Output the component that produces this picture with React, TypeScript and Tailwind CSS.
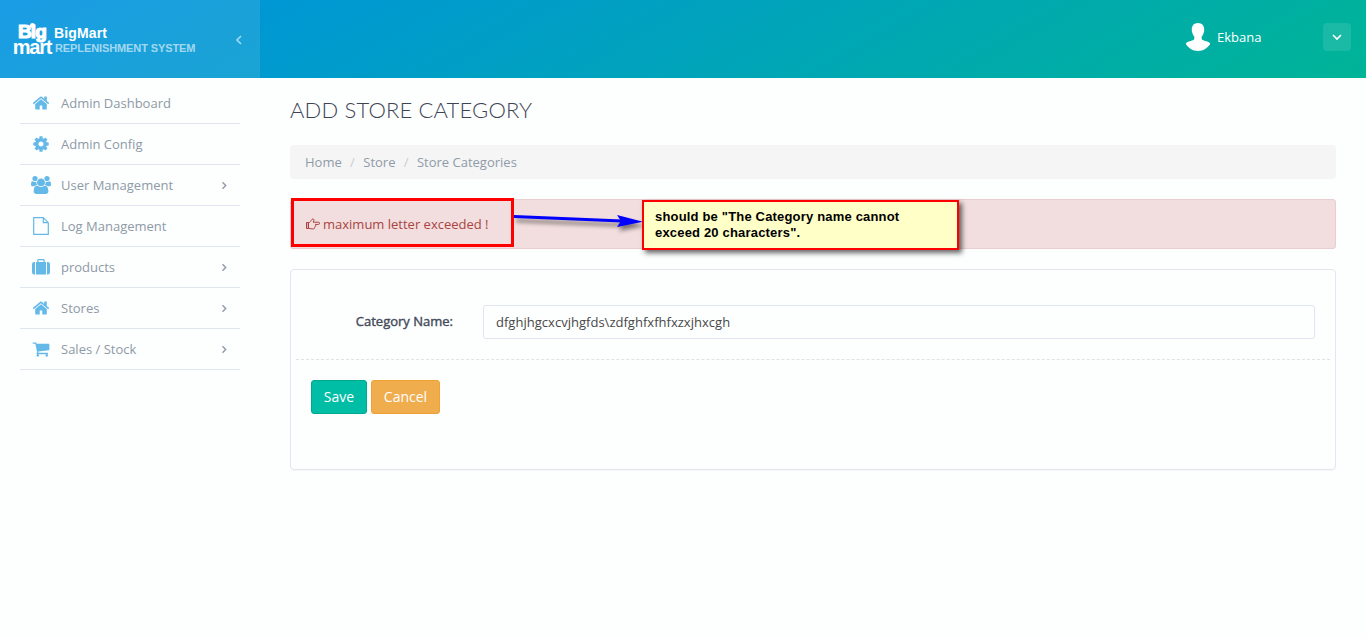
import React from "react";

const HOME =
  "M1472 992v480q0 26-19 45t-45 19h-384v-384h-256v384h-384q-26 0-45-19t-19-45v-480q0-1 .5-3t.5-3l575-474 575 474q1 2 1 6zm223-69l-62 74q-8 9-21 11h-3q-13 0-21-7l-692-577-692 577q-12 8-24 7-13-2-21-11l-62-74q-8-10-7-23.5t11-21.5l719-599q32-26 76-26t76 26l244 204v-195q0-14 9-23t23-9h192q14 0 23 9t9 23v408l219 182q10 8 11 21.5t-7 23.5z";
const COG =
  "M1152 896q0-106-75-181t-181-75-181 75-75 181 75 181 181 75 181-75 75-181zm512-109v222q0 12-8 23t-20 13l-185 28q-19 54-39 91 35 50 107 138 10 12 10 25t-9 23q-27 37-99 108t-94 71q-12 0-26-9l-138-108q-44 23-91 38-16 136-29 186-7 28-36 28h-222q-14 0-24.5-8.5t-11.5-21.5l-28-184q-49-16-90-37l-141 107q-10 9-25 9-14 0-25-11-126-114-165-168-7-10-7-23 0-12 8-23 15-21 51-66.5t54-70.5q-27-50-41-99l-183-27q-13-2-21-12.5t-8-23.5v-222q0-12 8-23t19-13l186-28q14-46 39-92-40-57-107-138-10-12-10-24 0-10 9-23 26-36 98.5-107.5t94.5-71.5q13 0 26 10l138 107q44-23 91-38 16-136 29-186 7-28 36-28h222q14 0 24.5 8.5t11.5 21.5l28 184q49 16 90 37l142-107q9-9 24-9 13 0 25 10 129 119 165 170 7 8 7 22 0 12-8 23-15 21-51 66.5t-54 70.5q26 50 41 98l183 28q13 2 21 12.5t8 23.5z";
const USERS =
  "M529 896q-162 5-265 128h-134q-82 0-138-40.5t-56-118.5q0-353 124-353 6 0 43.5 21t97.5 42.5 119 21.5q67 0 133-23-5 37-5 66 0 139 81 256zm1071 637q0 120-73 189.5t-194 69.5h-874q-121 0-194-69.5t-73-189.5q0-53 3.5-103.5t14-109 26.5-108.5 43-97.5 62-81 85.5-53.5 111.5-20q10 0 43 21.5t73 48 107 48 135 21.5 135-21.5 107-48 73-48 43-21.5q61 0 111.5 20t85.5 53.5 62 81 43 97.5 26.5 108.5 14 109 3.5 103.5zm-1024-1277q0 106-75 181t-181 75-181-75-75-181 75-181 181-75 181 75 75 181zm704 384q0 159-112.5 271.5t-271.5 112.5-271.5-112.5-112.5-271.5 112.5-271.5 271.5-112.5 271.5 112.5 112.5 271.5zm576 225q0 78-56 118.5t-138 40.5h-134q-103-123-265-128 81-117 81-256 0-29-5-66 66 23 133 23 59 0 119-21.5t97.5-42.5 43.5-21q124 0 124 353zm-128-609q0 106-75 181t-181 75-181-75-75-181 75-181 181-75 181 75 75 181z";
const CART =
  "M704 1536q0 52-38 90t-90 38-90-38-38-90 38-90 90-38 90 38 38 90zm896 0q0 52-38 90t-90 38-90-38-38-90 38-90 90-38 90 38 38 90zm128-1088v512q0 24-16.5 42.5t-40.5 21.5l-1044 122q13 60 13 70 0 16-24 64h920q26 0 45 19t19 45-19 45-45 19h-1024q-26 0-45-19t-19-45q0-11 8-31.5t16-36 21.5-40 15.5-29.5l-177-823h-204q-26 0-45-19t-19-45 19-45 45-19h256q16 0 28.5 6.5t19.5 15.5 13 24.5 8 26 5.5 29.5 4.5 26h1201q26 0 45 19t19 45z";

const HomeIcon = () => (
  <svg width="18" height="18" viewBox="0 0 1792 1792" fill="currentColor"><path d={HOME} /></svg>
);
const CogIcon = () => (
  <svg width="18" height="18" viewBox="0 0 1792 1792" fill="currentColor"><path d={COG} /></svg>
);
const UsersIcon = () => (
  <svg width="20" height="18" viewBox="-64 0 1920 1792" preserveAspectRatio="none" fill="currentColor"><path d={USERS} /></svg>
);
const FileIcon = () => (
  <svg width="16" height="18" viewBox="0 0 16 18" fill="none" stroke="currentColor" strokeWidth="1.2">
    <path d="M.7.7h9.6l5 5v11.6H.7zM10.3.7v5h5" />
  </svg>
);
const SuitcaseIcon = () => (
  <svg width="18" height="16" viewBox="0 0 18 16" fill="currentColor">
    <path d="M4 3h1.300V1.300Q5.300 0 6.600 0h4.800q1.300 0 1.300 1.300V3H14v12.500H4zM6.500 3h5V1.300h-5z" fillRule="evenodd" />
    <path d="M3 3v12.500H2.200Q0 15.500 0 13.300V5.200Q0 3 2.200 3zM15 3h.8Q18 3 18 5.200v8.100q0 2.200-2.200 2.200H15z" />
  </svg>
);
const CartIcon = () => (
  <svg width="18" height="18" viewBox="0 0 1792 1792" fill="currentColor"><path d={CART} /></svg>
);
const HandIcon = () => (
  <svg width="14" height="12" viewBox="0 0 14 12" fill="none" stroke="currentColor" strokeWidth="1" strokeLinejoin="round">
    <path d="M.5 4.500h2v6h-2z" fill="currentColor" fillOpacity="0.3" />
    <path d="M2.500 4.700C4.200 4.700 4.600 2.900 6 1.400 7 .3 8.300 1.200 7.800 2.700L7.200 4.200h5.300a1.100 1.100 0 0 1 0 2.200H9.300M9.500 6.400q.8 1-.3 1.700.4 1-.6 1.500 0 1.300-1.200 1.300H6.200C4.600 10.900 4.200 10.300 2.500 10.300" />
  </svg>
);

const items = [
  { label: "Admin Dashboard", icon: <HomeIcon /> },
  { label: "Admin Config", icon: <CogIcon /> },
  { label: "User Management", icon: <UsersIcon />, sub: true },
  { label: "Log Management", icon: <FileIcon /> },
  { label: "products", icon: <SuitcaseIcon />, sub: true },
  { label: "Stores", icon: <HomeIcon />, sub: true },
  { label: "Sales / Stock", icon: <CartIcon />, sub: true },
];

function Header() {
  return (
    <header className="flex h-[78px] bg-[linear-gradient(150deg,#0091e2_0%,#00b497_100%)]">
      <div className="flex w-[260px] items-center bg-white/10 pl-[13px] pr-[17px]">
        <div className="relative flex w-[38px] flex-col items-center whitespace-nowrap pt-[2px] font-['Liberation_Sans'] font-bold text-white">
          <span className="text-[19px] leading-[14px] tracking-[-0.8px] [-webkit-text-stroke:1.2px_white]">Big</span>
          <span className="text-[20px] leading-[16px] tracking-[-1.2px]">mart</span>
          <span className="absolute left-[17px] top-0 h-[5px] w-[5px] rounded-full bg-white" />
        </div>
        <div className="ml-[3px] flex flex-col whitespace-nowrap pt-[3px] font-['Liberation_Sans'] font-bold">
          <span className="text-[14px] leading-[15px] tracking-[0.15px] text-white">BigMart</span>
          <span className="pl-px text-[11px] leading-[14px] tracking-[-0.1px] text-white/60">REPLENISHMENT SYSTEM</span>
        </div>
        <svg className="ml-auto mt-[2px]" width="8" height="10" viewBox="0 0 8 10" fill="none" stroke="#9fd8f2" strokeWidth="1.7">
          <path d="M6 1 2 5l4 4" />
        </svg>
      </div>
      <div className="flex flex-1 items-center justify-end pb-1 pr-[15px]">
        <svg width="26" height="28" viewBox="0 0 26 28" fill="#fff">
          <path d="M13 0c4 0 6.200 2.800 6.200 6.500 0 1.500 0 2-.6 3.400-.6 1.900-1.200 3-1.900 3.700v2.200c0 1.200 1.500 1.700 3.600 2.200 2.700.6 4.300 1 4.900 2.800C22.500 25.500 18.300 28 13 28S3.500 25.500.8 20.800c.6-1.800 2.200-2.200 4.900-2.800 2.100-.5 3.600-1 3.600-2.200v-2.200c-.7-.7-1.300-1.800-1.900-3.700-.6-1.400-.6-1.900-.6-3.400C6.800 2.800 9 0 13 0z" />
        </svg>
        <span className="ml-[6px] w-[106px] pt-[2px] text-[13px] text-white">Ekbana</span>
        <span className="flex h-7 w-7 items-center justify-center rounded bg-white/10">
          <svg width="10" height="7" viewBox="0 0 10 7" fill="none" stroke="#fff" strokeWidth="1.7">
            <path d="m1 1 4 4 4-4" />
          </svg>
        </span>
      </div>
    </header>
  );
}

function Sidebar() {
  return (
    <nav className="w-[260px] px-5 pt-[5px]">
      {items.map((it) => (
        <a key={it.label} className="flex h-[41px] items-center border-b border-[#dfe6f0] pr-3 text-[13px] text-[#8e9aa6]">
          <span className="flex w-[41px] justify-center pl-px text-[#65b9e8]">{it.icon}</span>
          <span className="pt-[2px]">{it.label}</span>
          {it.sub && (
            <svg className="ml-auto mt-px" width="8" height="9" viewBox="0 0 8 9" fill="none" stroke="#8e9aa6" strokeWidth="1.4">
              <path d="m2.500 1.300 3.200 3.200-3.200 3.200" />
            </svg>
          )}
        </a>
      ))}
    </nav>
  );
}

function Annotation() {
  return (
    <>
      <div className="absolute left-0 top-[-2px] h-[49px] w-[223px] border-[3px] border-[#ff0000]" />
      <svg className="absolute left-[223px] top-2 overflow-visible drop-shadow-[2px_4px_2px_rgba(0,0,0,0.5)]" width="130" height="24" viewBox="0 0 130 24">
        <path d="M0 8.500 108 13" stroke="#0000ff" strokeWidth="3" />
        <path d="M103 7 129 13.800 103 19 107 13z" fill="#0000ff" />
      </svg>
      <div className="absolute left-[351px] top-0 h-[50px] w-[317px] whitespace-nowrap border-2 border-[#ff0000] bg-[#ffffc8] pl-[11px] pt-[7px] font-['Liberation_Sans'] text-[13px] font-bold leading-4 text-black shadow-[3px_3px_5px_rgba(0,0,0,0.6)]">
        <div className="tracking-[0.18px]">should be "The Category name cannot</div>
        <div className="tracking-[0.18px]">exceed 20 characters".</div>
      </div>
    </>
  );
}

export default function App() {
  return (
    <div className="h-[638px] w-[1366px] overflow-hidden bg-[#fdfefe] font-['Open_Sans',sans-serif]">
      <Header />
      <div className="flex">
        <Sidebar />
        <main className="flex flex-1 flex-col px-[30px]">
          <h1 className="mt-[17px] h-[30px] whitespace-nowrap font-['Lato'] text-[22px] font-light leading-[30px] tracking-[0.16px] text-[#3d4555]">ADD STORE CATEGORY</h1>
          <div className="mt-5 flex h-[34px] items-center rounded bg-[#f5f5f5] pl-[15px] pt-[2px] text-[13px] text-[#8f9ba8]">
            <span>Home</span>
            <span className="w-[21.5px] text-center text-[#ccc]">/</span>
            <span>Store</span>
            <span className="w-[21.5px] text-center text-[#ccc]">/</span>
            <span>Store Categories</span>
          </div>
          <div className="relative mt-5 flex h-[50px] items-center rounded-[3px] border border-[#ebccd1] bg-[#f2dede] pl-[15px] text-[13px] text-[#a94442]">
            <HandIcon />
            <span className="ml-[3px] pt-[2px]">maximum letter exceeded !</span>
            <Annotation />
          </div>
          <form className="mt-5 h-[201px] rounded border border-[#e1e6ef] px-[5px] shadow-[0_1px_1px_rgba(0,0,0,0.03)]">
            <div className="flex h-[90px] items-start border-b border-dashed border-[#e0e3e3] pr-[15px] pt-[35px]">
              <label className="w-[157px] pt-[7px] text-right text-[13px] leading-[18px] text-[#434a5a] [-webkit-text-stroke:0.4px_#434a5a]">Category Name:</label>
              <div className="ml-[30px] flex h-[34px] flex-1 items-center rounded-[3px] border border-[#dfe6f0] pl-3 pt-[2px] text-[13px] tracking-[0.02px] text-[#484848]">
                {"dfghjhgcxcvjhgfds\\zdfghfxfhfxzxjhxcgh"}
              </div>
            </div>
            <div className="flex gap-1 pl-[15px] pt-5 text-[14px] text-white">
              <button type="button" className="h-[34px] w-14 rounded-[3px] border border-[#00a890] bg-[#00bda5] pb-[2px]">Save</button>
              <button type="button" className="h-[34px] w-[69px] rounded-[3px] border border-[#eea236] bg-[#f0ad4e] pb-[2px]">Cancel</button>
            </div>
          </form>
        </main>
      </div>
    </div>
  );
}
